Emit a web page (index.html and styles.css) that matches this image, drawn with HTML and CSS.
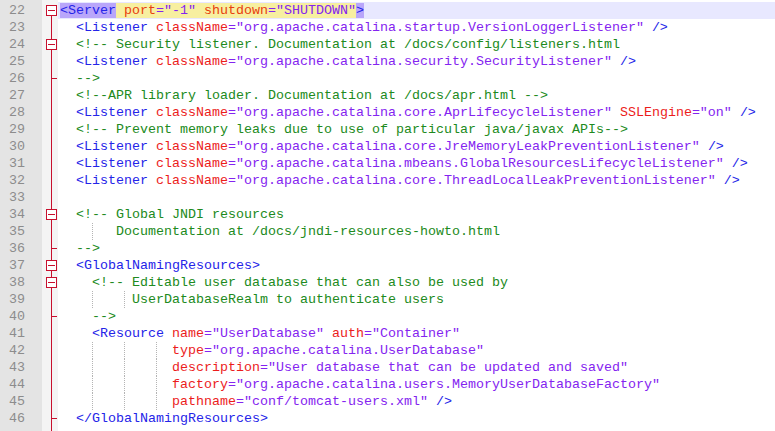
FILE: index.html
```html
<!DOCTYPE html>
<html lang="en">
<head>
    <meta charset="UTF-8">
    <title>server.xml</title>
    <link rel="stylesheet" href="styles.css">
</head>
<body>
    <div class="editor">
        <div class="line current"><span class="num">22</span><span class="fold first"><svg width="11" height="11"><rect x="0.5" y="0.5" width="10" height="10" fill="#fff" stroke="#c8102e"/><path d="M2 5.5h7" stroke="#c8102e"/></svg></span><span class="code"><span class="hl-tag"><span class="t">&lt;Server</span></span><span class="hl-attr"> <span class="a">port</span><span class="v">="-1"</span> <span class="a">shutdown</span><span class="v">="SHUTDOWN"</span></span><span class="hl-tag"><span class="t">&gt;</span></span></span></div>
        <div class="line"><span class="num">23</span><span class="fold"></span><span class="code">  <span class="t">&lt;Listener</span> <span class="a">className</span><span class="v">="org.apache.catalina.startup.VersionLoggerListener"</span> <span class="t">/&gt;</span></span></div>
        <div class="line"><span class="num">24</span><span class="fold box"><svg width="11" height="11"><rect x="0.5" y="0.5" width="10" height="10" fill="#fff" stroke="#c8102e"/><path d="M2 5.5h7" stroke="#c8102e"/></svg></span><span class="code">  <span class="c">&lt;!-- Security listener. Documentation at /docs/config/listeners.html</span></span></div>
        <div class="line"><span class="num">25</span><span class="fold"></span><span class="code">  <span class="t">&lt;Listener</span> <span class="a">className</span><span class="v">="org.apache.catalina.security.SecurityListener"</span> <span class="t">/&gt;</span></span></div>
        <div class="line"><span class="num">26</span><span class="fold end"></span><span class="code">  <span class="c">--&gt;</span></span></div>
        <div class="line"><span class="num">27</span><span class="fold"></span><span class="code">  <span class="c">&lt;!--APR library loader. Documentation at /docs/apr.html --&gt;</span></span></div>
        <div class="line"><span class="num">28</span><span class="fold"></span><span class="code">  <span class="t">&lt;Listener</span> <span class="a">className</span><span class="v">="org.apache.catalina.core.AprLifecycleListener"</span> <span class="a">SSLEngine</span><span class="v">="on"</span> <span class="t">/&gt;</span></span></div>
        <div class="line"><span class="num">29</span><span class="fold"></span><span class="code">  <span class="c">&lt;!-- Prevent memory leaks due to use of particular java/javax APIs--&gt;</span></span></div>
        <div class="line"><span class="num">30</span><span class="fold"></span><span class="code">  <span class="t">&lt;Listener</span> <span class="a">className</span><span class="v">="org.apache.catalina.core.JreMemoryLeakPreventionListener"</span> <span class="t">/&gt;</span></span></div>
        <div class="line"><span class="num">31</span><span class="fold"></span><span class="code">  <span class="t">&lt;Listener</span> <span class="a">className</span><span class="v">="org.apache.catalina.mbeans.GlobalResourcesLifecycleListener"</span> <span class="t">/&gt;</span></span></div>
        <div class="line"><span class="num">32</span><span class="fold"></span><span class="code">  <span class="t">&lt;Listener</span> <span class="a">className</span><span class="v">="org.apache.catalina.core.ThreadLocalLeakPreventionListener"</span> <span class="t">/&gt;</span></span></div>
        <div class="line"><span class="num">33</span><span class="fold"></span><span class="code"></span></div>
        <div class="line"><span class="num">34</span><span class="fold box"><svg width="11" height="11"><rect x="0.5" y="0.5" width="10" height="10" fill="#fff" stroke="#c8102e"/><path d="M2 5.5h7" stroke="#c8102e"/></svg></span><span class="code">  <span class="c">&lt;!-- Global JNDI resources</span></span></div>
        <div class="line"><span class="num">35</span><span class="fold"></span><span class="code"><span class="c">    <span class="ig">   </span>Documentation at /docs/jndi-resources-howto.html</span></span></div>
        <div class="line"><span class="num">36</span><span class="fold end"></span><span class="code">  <span class="c">--&gt;</span></span></div>
        <div class="line"><span class="num">37</span><span class="fold box"><svg width="11" height="11"><rect x="0.5" y="0.5" width="10" height="10" fill="#fff" stroke="#c8102e"/><path d="M2 5.5h7" stroke="#c8102e"/></svg></span><span class="code">  <span class="t">&lt;GlobalNamingResources&gt;</span></span></div>
        <div class="line"><span class="num">38</span><span class="fold box"><svg width="11" height="11"><rect x="0.5" y="0.5" width="10" height="10" fill="#fff" stroke="#c8102e"/><path d="M2 5.5h7" stroke="#c8102e"/></svg></span><span class="code">    <span class="c">&lt;!-- Editable user database that can also be used by</span></span></div>
        <div class="line"><span class="num">39</span><span class="fold"></span><span class="code"><span class="c">    <span class="ig">    </span><span class="ig"> </span>UserDatabaseRealm to authenticate users</span></span></div>
        <div class="line"><span class="num">40</span><span class="fold end"></span><span class="code">    <span class="c">--&gt;</span></span></div>
        <div class="line"><span class="num">41</span><span class="fold"></span><span class="code">    <span class="t">&lt;Resource</span> <span class="a">name</span><span class="v">="UserDatabase"</span> <span class="a">auth</span><span class="v">="Container"</span></span></div>
        <div class="line"><span class="num">42</span><span class="fold"></span><span class="code">    <span class="ig">    </span><span class="ig">    </span><span class="ig">  </span><span class="a">type</span><span class="v">="org.apache.catalina.UserDatabase"</span></span></div>
        <div class="line"><span class="num">43</span><span class="fold"></span><span class="code">    <span class="ig">    </span><span class="ig">    </span><span class="ig">  </span><span class="a">description</span><span class="v">="User database that can be updated and saved"</span></span></div>
        <div class="line"><span class="num">44</span><span class="fold"></span><span class="code">    <span class="ig">    </span><span class="ig">    </span><span class="ig">  </span><span class="a">factory</span><span class="v">="org.apache.catalina.users.MemoryUserDatabaseFactory"</span></span></div>
        <div class="line"><span class="num">45</span><span class="fold"></span><span class="code">    <span class="ig">    </span><span class="ig">    </span><span class="ig">  </span><span class="a">pathname</span><span class="v">="conf/tomcat-users.xml"</span> <span class="t">/&gt;</span></span></div>
        <div class="line"><span class="num">46</span><span class="fold end"></span><span class="code">  <span class="t">&lt;/GlobalNamingResources&gt;</span></span></div>
        <div class="line filler"><span class="num"></span><span class="fold"></span><span class="code"></span></div>
    </div>
</body>
</html>
```

FILE: styles.css
```css
body {
    margin: 0;
    background-color: #fff;
}
.editor {
    display: flex;
    flex-direction: column;
    height: 100vh;
    padding-top: 2px;
    box-sizing: border-box;
    overflow: hidden;
    background: linear-gradient(to right, #e4e4e4 0 42px, #f4f4f4 42px 58px, #fff 58px);
    font-family: "Liberation Mono", "Courier New", monospace;
    font-size: 13.33px;
}
.line {
    display: flex;
    flex-shrink: 0;
    height: 17px;
    line-height: 17px;
}
.filler {
    flex: 1 1 auto;
    height: auto;
}
.num {
    width: 42px;
    padding-left: 9px;
    box-sizing: border-box;
    color: #8c8c8c;
}
.fold {
    width: 16px;
    flex-shrink: 0;
    background: linear-gradient(#c8102e, #c8102e) 9px 0 / 1px 100% no-repeat;
}
.fold.first {
    background-position: 9px 14px;
    background-size: 1px 3px;
}
.fold.end {
    background:
        linear-gradient(#c8102e, #c8102e) 9px 0 / 1px 100% no-repeat,
        linear-gradient(#c8102e, #c8102e) 10px 8px / 5px 1px no-repeat;
}
.fold svg {
    display: block;
    margin: 3px 0 0 4px;
}
.code {
    flex: 1;
    padding-left: 2px;
    white-space: pre;
    color: #000;
}
.current .code {
    background-color: #e8e8ff;
}
.hl-tag {
    background-color: #b9a6fa;
}
.hl-attr {
    background-color: #f7efa0;
}
.t {
    color: #2424e8;
}
.a {
    color: #ec1c1c;
}
.v {
    color: #8424f0;
}
.c {
    color: #208a20;
}
.hl-attr .a {
    color: #e8400c;
}
.ig {
    display: inline-block;
    height: 17px;
    vertical-align: top;
    background: repeating-linear-gradient(#b4b4b4 0 1px, transparent 1px 2px) 0 0 / 1px 100% no-repeat;
}
```
